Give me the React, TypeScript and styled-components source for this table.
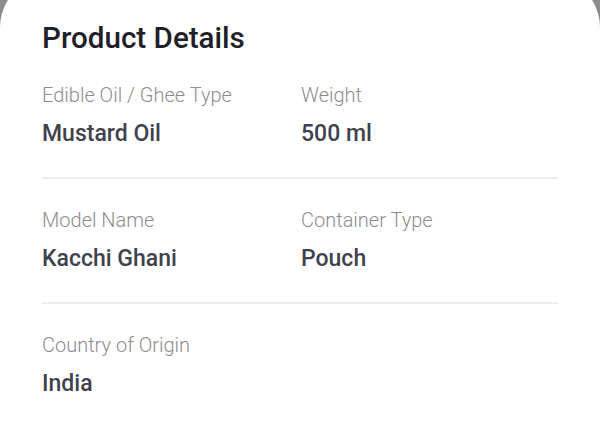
import { FC } from "react";
import styled, { createGlobalStyle } from "styled-components";

const GlobalStyle = createGlobalStyle`
  html, body {
    margin: 0;
    padding: 0;
    background: #8c8c8c;
    font-family: Roboto, "Noto Sans", "Liberation Sans", sans-serif;
  }
`;

const Sheet = styled.div`
  background-color: #ffffff;
  margin-top: -25px;
  min-height: 448px;
  border-radius: 53px 53px 0 0;
  padding: 46px 42px 0 42px;
  box-sizing: border-box;
`;

const Title = styled.h2`
  margin: 0 0 28px 0;
  font-size: 29.6px;
  font-weight: 500;
  line-height: 34px;
  color: #1f2029;
`;

interface IRowStyle {
  last?: boolean;
}

const Row = styled.div<IRowStyle>`
  display: grid;
  grid-template-columns: 259px 1fr;
  padding: 0 0 ${(p) => (p.last ? "0" : "29px")} 0;
  margin-bottom: ${(p) => (p.last ? "0" : "29px")};
  border-bottom: ${(p) => (p.last ? "none" : "2px solid #ececec")};
`;

const Field = styled.div`
  display: flex;
  flex-direction: column;
  gap: 13px;
`;

const Label = styled.span`
  font-size: 20px;
  font-weight: 300;
  line-height: 24px;
  color: #8d8d90;
`;

const Value = styled.span`
  font-size: 23px;
  font-weight: 500;
  line-height: 28px;
  color: #41424d;
`;

interface IDetail {
  label: string;
  value: string;
}

const rows: IDetail[][] = [
  [
    { label: "Edible Oil / Ghee Type", value: "Mustard Oil" },
    { label: "Weight", value: "500 ml" },
  ],
  [
    { label: "Model Name", value: "Kacchi Ghani" },
    { label: "Container Type", value: "Pouch" },
  ],
  [{ label: "Country of Origin", value: "India" }],
];

const App: FC = () => {
  return (
    <>
      <GlobalStyle />
      <Sheet>
        <Title>Product Details</Title>
        {rows.map((row, i) => (
          <Row key={i} last={i === rows.length - 1}>
            {row.map((d) => (
              <Field key={d.label}>
                <Label>{d.label}</Label>
                <Value>{d.value}</Value>
              </Field>
            ))}
          </Row>
        ))}
      </Sheet>
    </>
  );
};

export default App;
